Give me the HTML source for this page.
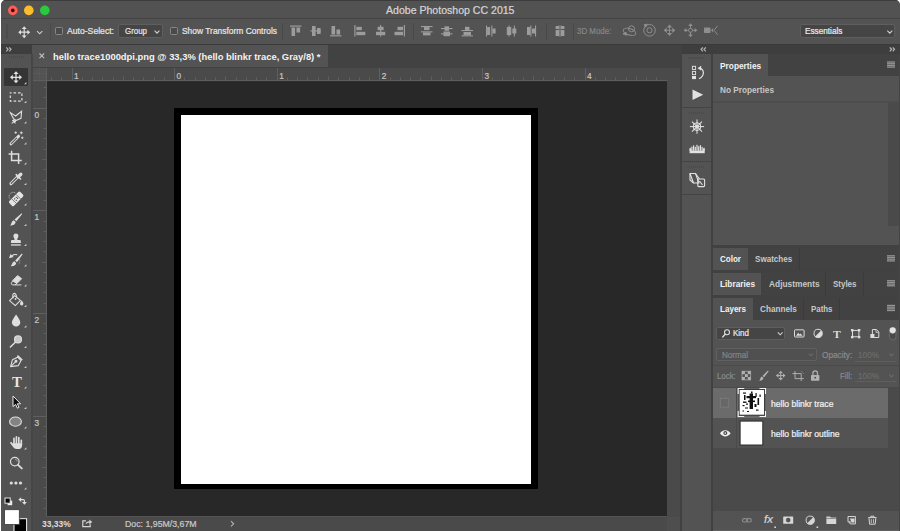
<!DOCTYPE html>
<html><head><meta charset="utf-8"><title>Adobe Photoshop CC 2015</title>
<style>
*{box-sizing:border-box;margin:0;padding:0}
html,body{width:900px;height:531px;overflow:hidden;background:#fff}
body{font-family:"Liberation Sans",sans-serif;font-size:9.5px;color:#ddd;position:relative}
.a{position:absolute}
svg{position:absolute;overflow:visible}
#win{left:0;top:0;width:900px;height:531px;background:#535353;overflow:hidden;clip-path:inset(0 0 0 1px round 5px 5px 0 0)}
.dot{width:9.600px;height:9.600px;border-radius:50%;top:5.600px}
.sep{width:1px;background:#4a4a4a;top:23px;height:17px}
.t{white-space:nowrap;line-height:12px;transform-origin:0 50%;-webkit-text-stroke:0.22px currentColor}
.b{-webkit-text-stroke:0}
.b{font-weight:bold}
.cb{width:8px;height:8px;border:1px solid #868686;border-radius:1.5px;background:#4a4a4a}
.dd{background:#454545;border:1px solid #5e5e5e;border-radius:2px}
.tsep{width:1px;height:22px;background:#3b3b3b}
.tb{background:#424242;height:22px;left:713px;width:187px}
.tab{background:#535353;height:22px;left:713px}
.tri{width:0;height:0;border-left:3px solid transparent;border-bottom:3px solid #cfcfcf}
.grip{height:2px;background:repeating-linear-gradient(90deg,#4a4a4a 0 1px,transparent 1px 2px)}
</style></head><body>
<div id="win" class="a">
<div class="a" style="left:0px;top:0px;width:900px;height:18px;background:#525252;border-top:1px solid #3c3c3c"></div>
<div class="a t" style="left:386.4px;top:4.26px;font-size:10.8px;color:#d6d6d6;transform:scaleX(0.9774);">Adobe Photoshop CC 2015</div>
<div class="a" style="left:0px;top:18px;width:900px;height:27px;background:#535353;border-top:1px solid #434343;border-bottom:1px solid #3a3a3a"></div>
<div class="a" style="left:6px;top:24px;width:1.5px;height:15px;background:#4c4c4c;"></div>
<div class="a sep" style="left:50px"></div>
<div class="a cb" style="left:55px;top:27px"></div>
<div class="a t" style="left:67px;top:25.48px;font-size:9.0px;color:#e6e6e6;transform:scaleX(0.9586);">Auto-Select:</div>
<div class="a dd" style="left:118px;top:24px;width:45px;height:14px"></div>
<div class="a t" style="left:125px;top:25.48px;font-size:9.0px;color:#e6e6e6;transform:scaleX(0.8795);">Group</div>
<div class="a cb" style="left:170px;top:27px"></div>
<div class="a t" style="left:181.7px;top:25.48px;font-size:9.0px;color:#e6e6e6;transform:scaleX(0.9355);">Show Transform Controls</div>
<div class="a sep" style="left:282px"></div>
<div class="a sep" style="left:413px"></div>
<div class="a sep" style="left:546px"></div>
<div class="a sep" style="left:573px"></div>
<div class="a t" style="left:577px;top:25.48px;font-size:9.0px;color:#858585;transform:scaleX(0.8813);">3D Mode:</div>
<div class="a dd" style="left:800px;top:24px;width:95px;height:14px"></div>
<div class="a t" style="left:805.3px;top:25.48px;font-size:9.0px;color:#ececec;transform:scaleX(0.9115);">Essentials</div>
<div class="a" style="left:33px;top:45px;width:648px;height:22px;background:#424242;"></div>
<div class="a" style="left:33px;top:45px;width:294.8px;height:21.7px;background:#535353;"></div>
<div class="a t b" style="left:52.5px;top:51.18px;font-size:9.0px;color:#f2f2f2;transform:scaleX(1.0434);">hello trace1000dpi.png @ 33,3% (hello blinkr trace, Gray/8) *</div>
<div class="a" style="left:33px;top:67px;width:648px;height:14px;background:#4a4a4a;border-top:1px solid #424242"></div>
<div class="a" style="left:33px;top:68px;width:14px;height:449px;background:#4a4a4a;"></div>
<div class="a" style="left:33px;top:68px;width:13px;height:12px;background:#535353;"></div>
<div class="a" style="left:47px;top:81px;width:620px;height:435px;background:#282828;"></div>
<div class="a" style="left:174px;top:108px;width:364px;height:381px;background:#000;"></div>
<div class="a" style="left:181px;top:115px;width:349.5px;height:369px;background:#fff;"></div>
<div class="a" style="left:667px;top:81px;width:12.5px;height:450px;background:#4a4a4a;"></div>
<div class="a" style="left:33px;top:516.5px;width:634px;height:15px;background:#4a4a4a;"></div>
<div class="a t b" style="left:42.3px;top:517.68px;font-size:9.0px;color:#dedede;transform:scaleX(0.9400);">33,33%</div>
<div class="a t" style="left:125.4px;top:517.68px;font-size:9.0px;color:#c8c8c8;transform:scaleX(0.9735);">Doc: 1,95M/3,67M</div>
<div class="a t" style="left:74.0px;top:69.72px;font-size:8.3px;color:#c6c6c6;">1</div>
<div class="a t" style="left:176.6px;top:69.72px;font-size:8.3px;color:#c6c6c6;">0</div>
<div class="a t" style="left:279.2px;top:69.72px;font-size:8.3px;color:#c6c6c6;">1</div>
<div class="a t" style="left:381.8px;top:69.72px;font-size:8.3px;color:#c6c6c6;">2</div>
<div class="a t" style="left:484.4px;top:69.72px;font-size:8.3px;color:#c6c6c6;">3</div>
<div class="a t" style="left:587.0px;top:69.72px;font-size:8.3px;color:#c6c6c6;">4</div>
<div class="a t" style="left:34.6px;top:108.82px;font-size:8.3px;color:#c6c6c6;">0</div>
<div class="a t" style="left:34.6px;top:211.42px;font-size:8.3px;color:#c6c6c6;">1</div>
<div class="a t" style="left:34.6px;top:314.02px;font-size:8.3px;color:#c6c6c6;">2</div>
<div class="a t" style="left:34.6px;top:416.62px;font-size:8.3px;color:#c6c6c6;">3</div>
<div class="a" style="left:0px;top:45px;width:33px;height:486px;background:#535353;"></div>
<div class="a" style="left:0px;top:45px;width:32px;height:9px;background:#3e3e3e;"></div>
<div class="a" style="left:30.7px;top:54px;width:2.1px;height:477px;background:#464646;"></div>
<div class="a grip" style="left:9px;top:56px;width:15px"></div>
<div class="a" style="left:4px;top:68px;width:24px;height:18px;background:#353535;border-radius:1px"></div>
<div class="a" style="left:679.5px;top:45px;width:220.5px;height:486px;background:#414141;"></div>
<div class="a" style="left:682px;top:45px;width:218px;height:9px;background:#3e3e3e;"></div>
<div class="a" style="left:682px;top:54px;width:28.6px;height:477px;background:#535353;"></div>
<div class="a" style="left:682px;top:107px;width:29px;height:1px;background:#444;"></div>
<div class="a" style="left:682px;top:161px;width:29px;height:1px;background:#444;"></div>
<div class="a" style="left:682px;top:194px;width:29px;height:1px;background:#444;"></div>
<div class="a grip" style="left:689px;top:57px;width:15px"></div>
<div class="a grip" style="left:689px;top:112px;width:15px"></div>
<div class="a grip" style="left:689px;top:166px;width:15px"></div>
<div class="a tb" style="top:54px"></div><div class="a tab" style="top:54px;width:55px"></div>
<div class="a t b" style="left:720.3px;top:59.88px;font-size:9.0px;color:#f2f2f2;transform:scaleX(0.9252);">Properties</div>
<div class="a" style="left:713px;top:76px;width:187px;height:169px;background:#535353;"></div>
<div class="a" style="left:713px;top:100.5px;width:187px;height:2px;background:#4d4d4d;"></div>
<div class="a" style="left:888px;top:102.5px;width:12px;height:123.5px;background:#4a4a4a;"></div>
<div class="a t b" style="left:720px;top:83.88px;font-size:9.0px;color:#c6c6c6;transform:scaleX(0.9150);">No Properties</div>
<div class="a tb" style="top:248px"></div><div class="a tab" style="top:248px;width:35px"></div>
<div class="a t b" style="left:720.3px;top:253.18px;font-size:9.0px;color:#f2f2f2;transform:scaleX(0.8936);">Color</div>
<div class="a t b" style="left:755px;top:253.18px;font-size:9.0px;color:#c8c8c8;transform:scaleX(0.8957);">Swatches</div>
<div class="a tsep" style="left:799px;top:248px"></div>
<div class="a tb" style="top:273px"></div><div class="a tab" style="top:273px;width:48px"></div>
<div class="a t b" style="left:720.3px;top:277.98px;font-size:9.0px;color:#f2f2f2;transform:scaleX(0.9203);">Libraries</div>
<div class="a t b" style="left:768.5px;top:277.98px;font-size:9.0px;color:#c8c8c8;transform:scaleX(0.9282);">Adjustments</div>
<div class="a tsep" style="left:825px;top:273px"></div>
<div class="a t b" style="left:832.9px;top:277.98px;font-size:9.0px;color:#c8c8c8;transform:scaleX(0.8857);">Styles</div>
<div class="a tsep" style="left:863px;top:273px"></div>
<div class="a tb" style="top:298px"></div><div class="a tab" style="top:298px;width:40px"></div>
<div class="a t b" style="left:720.3px;top:303.08px;font-size:9.0px;color:#f2f2f2;transform:scaleX(0.8956);">Layers</div>
<div class="a t b" style="left:760px;top:303.08px;font-size:9.0px;color:#c8c8c8;transform:scaleX(0.9083);">Channels</div>
<div class="a tsep" style="left:803px;top:298px"></div>
<div class="a t b" style="left:810.7px;top:303.08px;font-size:9.0px;color:#c8c8c8;transform:scaleX(0.8770);">Paths</div>
<div class="a tsep" style="left:839px;top:298px"></div>
<div class="a" style="left:713px;top:320px;width:187px;height:211px;background:#535353;"></div>
<div class="a dd" style="left:716px;top:327px;width:69px;height:13px"></div>
<div class="a t" style="left:732.8px;top:327.38px;font-size:9.0px;color:#e6e6e6;transform:scaleX(0.8881);">Kind</div>
<div class="a" style="left:716px;top:348px;width:101px;height:13px;border:1px solid #606060;border-radius:2px;background:#505050"></div>
<div class="a t" style="left:722px;top:348.78px;font-size:9.0px;color:#858585;transform:scaleX(0.8961);">Normal</div>
<div class="a t" style="left:821.6px;top:348.78px;font-size:9.0px;color:#8a8a8a;transform:scaleX(0.9177);">Opacity:</div>
<div class="a t" style="left:857.5px;top:348.78px;font-size:9.0px;color:#6c6c6c;transform:scaleX(0.9118);">100%</div>
<div class="a" style="left:855px;top:361px;width:41px;height:1px;background:#5e5e5e;"></div>
<div class="a" style="left:713px;top:365px;width:187px;height:1px;background:#4a4a4a;"></div>
<div class="a t" style="left:717.4px;top:369.58px;font-size:9.0px;color:#8a8a8a;transform:scaleX(0.8738);">Lock:</div>
<div class="a t" style="left:839.8px;top:369.58px;font-size:9.0px;color:#8a8a8a;transform:scaleX(0.8714);">Fill:</div>
<div class="a t" style="left:857.5px;top:369.58px;font-size:9.0px;color:#6c6c6c;transform:scaleX(0.9118);">100%</div>
<div class="a" style="left:855px;top:381px;width:41px;height:1px;background:#5e5e5e;"></div>
<div class="a" style="left:713px;top:387px;width:187px;height:124px;background:#4a4a4a;"></div>
<div class="a" style="left:713px;top:388px;width:175px;height:29.5px;background:#6b6b6b;"></div>
<div class="a" style="left:713px;top:418px;width:175px;height:30px;background:#535353;"></div>
<div class="a" style="left:736px;top:388px;width:1px;height:60px;background:#4a4a4a;"></div>
<div class="a t" style="left:770.5px;top:398.08px;font-size:9.0px;color:#f2f2f2;transform:scaleX(0.9522);">hello blinkr trace</div>
<div class="a t" style="left:770.5px;top:427.98px;font-size:9.0px;color:#f2f2f2;transform:scaleX(0.9508);">hello blinkr outline</div>
<div class="a" style="left:713px;top:511px;width:187px;height:20px;background:#535353;"></div>
<div class="a" style="left:713px;top:529.5px;width:187px;height:1.5px;background:#606060;"></div>
<div class="a" style="left:667px;top:516.5px;width:12.5px;height:14.5px;background:#4e4e4e;"></div>
<div class="a t b" style="left:11.9px;top:375.63px;font-size:15.5px;color:#e6e6e6;transform:scaleX(0.9571);font-family:'Liberation Serif',serif;">T</div>
<div class="a t b" style="left:833.2px;top:327.79px;font-size:11px;color:#dcdcdc;transform:scaleX(1.0621);font-family:'Liberation Serif',serif;">T</div>
<div class="a t" style="left:763.6px;top:513.42px;font-size:11.5px;color:#d8d8d8;transform:scaleX(0.9829);font-style:italic;">fx</div>
<div class="a" style="left:899px;top:54px;width:1px;height:477px;background:#444;"></div>
<svg style="left:0;top:0" width="900" height="531" viewBox="0 0 900 531" fill="none" stroke="none">
<circle cx="12.800" cy="10.400" r="4.800" fill="#fc5f57"/><circle cx="12.800" cy="10.400" r="1.800" fill="#3a0000"/><circle cx="28.800" cy="10.400" r="4.800" fill="#fdbc2e"/><circle cx="44.800" cy="10.400" r="4.800" fill="#2bc840"/>
<g stroke="#dedede" stroke-width="1.2" fill="#dedede" stroke-linejoin="miter"><path d="M20.1 32.2H28.299999999999997M24.2 28.1V36.300000000000004" fill="none"/><path stroke="none" d="M18.200000000000003 32.2l2.8000000000000003 -2.5v5.0zM30.199999999999996 32.2l-2.8000000000000003 -2.5v5.0zM24.2 26.200000000000003l-2.5 2.8000000000000003h5.0zM24.2 38.2l-2.5 -2.8000000000000003h5.0z"/></g>
<path d="M37.1 31.1L39.7 33.8L42.300000000000004 31.1" stroke="#cfcfcf" stroke-width="1.1" fill="none"/>
<path d="M154.6 30.7L157 33.1L159.4 30.7" stroke="#cfcfcf" stroke-width="1.1" fill="none"/>
<path d="M887.3 30.65L889.8 33.2L892.3 30.65" stroke="#cfcfcf" stroke-width="1.1" fill="none"/>
<rect x="290" y="25.5" width="11.5" height="1.2" fill="#9c9c9c"/><rect x="291.5" y="27.5" width="3.6" height="8.5" fill="#9c9c9c"/><rect x="296.5" y="27.5" width="3.6" height="5" fill="#9c9c9c"/>
<rect x="310.5" y="30.3" width="10.5" height="1.2" fill="#9c9c9c"/><rect x="312" y="26" width="3.6" height="10" fill="#9c9c9c"/><rect x="317" y="28" width="3.6" height="6" fill="#9c9c9c"/>
<rect x="330" y="35.2" width="11.5" height="1.2" fill="#9c9c9c"/><rect x="331.5" y="26" width="3.6" height="8.5" fill="#9c9c9c"/><rect x="336.5" y="29.5" width="3.6" height="5" fill="#9c9c9c"/>
<rect x="354.3" y="25" width="1.2" height="11.5" fill="#9c9c9c"/><rect x="356.3" y="26.8" width="5.5" height="3.4" fill="#9c9c9c"/><rect x="356.3" y="31.8" width="9" height="3.4" fill="#9c9c9c"/>
<rect x="380" y="25" width="1.2" height="11.5" fill="#9c9c9c"/><rect x="377.6" y="26.8" width="6" height="3.4" fill="#9c9c9c"/><rect x="376" y="31.8" width="9.2" height="3.4" fill="#9c9c9c"/>
<rect x="403.8" y="25" width="1.2" height="11.5" fill="#9c9c9c"/><rect x="397.5" y="26.8" width="5.5" height="3.4" fill="#9c9c9c"/><rect x="394.5" y="31.8" width="8.5" height="3.4" fill="#9c9c9c"/>
<rect x="421" y="26" width="11.5" height="1.1" fill="#9c9c9c"/><rect x="424" y="27.1" width="5.5" height="3" fill="#9c9c9c"/><rect x="421" y="31.3" width="11.5" height="1.1" fill="#9c9c9c"/><rect x="423" y="32.4" width="7.5" height="3" fill="#9c9c9c"/>
<rect x="441" y="28" width="11.5" height="1.1" fill="#9c9c9c"/><rect x="444.5" y="26.3" width="4.5" height="4.5" fill="#9c9c9c"/><rect x="441" y="33.3" width="11.5" height="1.1" fill="#9c9c9c"/><rect x="443.5" y="31.5" width="6.5" height="4.7" fill="#9c9c9c"/>
<rect x="461.5" y="30" width="11.5" height="1.1" fill="#9c9c9c"/><rect x="465" y="26.8" width="4.5" height="3.2" fill="#9c9c9c"/><rect x="461.5" y="35.3" width="11.5" height="1.1" fill="#9c9c9c"/><rect x="463.5" y="32" width="7.5" height="3.3" fill="#9c9c9c"/>
<rect x="486" y="25.5" width="1.1" height="11" fill="#9c9c9c"/><rect x="487.1" y="27" width="3" height="8" fill="#9c9c9c"/><rect x="491.3" y="25.5" width="1.1" height="11" fill="#9c9c9c"/><rect x="492.4" y="28.5" width="3.2" height="5" fill="#9c9c9c"/>
<rect x="508.5" y="25.5" width="1.1" height="11" fill="#9c9c9c"/><rect x="506.8" y="27" width="4.5" height="8" fill="#9c9c9c"/><rect x="513.8" y="25.5" width="1.1" height="11" fill="#9c9c9c"/><rect x="512.3" y="28.5" width="4" height="5" fill="#9c9c9c"/>
<rect x="530.3" y="25.5" width="1.1" height="11" fill="#9c9c9c"/><rect x="527" y="27" width="3.3" height="8" fill="#9c9c9c"/><rect x="535" y="25.5" width="1.1" height="11" fill="#9c9c9c"/><rect x="532" y="28.5" width="3" height="5" fill="#9c9c9c"/>
<rect x="555.6" y="26" width="3.6" height="3" fill="#9c9c9c"/><rect x="555.6" y="30" width="3.6" height="6" fill="#9c9c9c"/><rect x="560.8" y="26" width="3.6" height="3" fill="#9c9c9c"/><rect x="560.8" y="30" width="3.6" height="6" fill="#9c9c9c"/><rect x="559.6" y="25" width="0.8" height="12" fill="#9c9c9c"/>
<g transform="translate(0 -0.700)">
<g stroke="#8e8e8e" stroke-width="1" fill="none"><circle cx="631.5" cy="29.5" r="3"/><ellipse cx="629.5" cy="32.5" rx="6.5" ry="3.2" transform="rotate(18 629.5 32.5)"/><path d="M623 34.5l3.5 1.5l-0.5-3z" fill="#8e8e8e"/></g>
<g stroke="#8e8e8e" stroke-width="1" fill="none"><circle cx="649.5" cy="31" r="5.8"/><circle cx="649.5" cy="31" r="2.6"/><path d="M644 25.5l3.3-0.6l-1.5 3z" fill="#8e8e8e"/></g>
<g stroke="#8e8e8e" stroke-width="1" fill="#8e8e8e" stroke-linejoin="miter"><path d="M665.6 31H673.4M669.5 27.1V34.9" fill="none"/><path stroke="none" d="M663.7 31l3.0 -2.6999999999999997v5.3999999999999995zM675.3 31l-3.0 -2.6999999999999997v5.3999999999999995zM669.5 25.200000000000003l-2.6999999999999997 3.0h5.3999999999999995zM669.5 36.8l-2.6999999999999997 -3.0h5.3999999999999995z"/></g>
<g stroke="#8e8e8e" stroke-width="1" fill="#8e8e8e"><path d="M685 31H696M690.5 25.5V36.5" fill="none"/><circle cx="690.5" cy="31" r="2" fill="#535353"/><path stroke="none" d="M690.5 24l2.3 2.8h-4.6zM690.5 38l2.3-2.8h-4.6zM683.6 31l2.8-2.3v4.6zM697.4 31l-2.8-2.3v4.6z"/></g>
<g fill="#8e8e8e"><rect x="704" y="28.3" width="6.5" height="5.4" rx="0.8"/><path d="M711 31l2.2-2.2v4.4z"/><path d="M717.5 26.5l-3.3 4.5l3.3 4.5" fill="none" stroke="#8e8e8e" stroke-width="0.9"/></g>
</g>
<path d="M39.5 53.5l4.6 4.6M44.1 53.5l-4.6 4.6" stroke="#bdbdbd" stroke-width="1.1"/>
<path d="M6.3 47.3l1.8 2l-1.8 2M9.2 47.3l1.8 2l-1.8 2" stroke="#b4b4b4" stroke-width="1.250" fill="none"/>
<path d="M705.8 47.3l-1.8 2l1.8 2M702.9 47.3l-1.8 2l1.8 2" stroke="#b4b4b4" stroke-width="1.250" fill="none"/>
<path d="M889.8 47.3l1.8 2l-1.8 2M892.6999999999999 47.3l1.8 2l-1.8 2" stroke="#b4b4b4" stroke-width="1.250" fill="none"/>
<rect x="887" y="61.400000000000006" width="8" height="1.25" fill="#959595"/><rect x="887" y="63.1" width="8" height="1.25" fill="#959595"/><rect x="887" y="64.8" width="8" height="1.25" fill="#959595"/><rect x="887" y="66.5" width="8" height="1.25" fill="#959595"/>
<rect x="887" y="255.2" width="8" height="1.25" fill="#959595"/><rect x="887" y="256.9" width="8" height="1.25" fill="#959595"/><rect x="887" y="258.6" width="8" height="1.25" fill="#959595"/><rect x="887" y="260.3" width="8" height="1.25" fill="#959595"/>
<rect x="887" y="280.09999999999997" width="8" height="1.25" fill="#959595"/><rect x="887" y="281.79999999999995" width="8" height="1.25" fill="#959595"/><rect x="887" y="283.5" width="8" height="1.25" fill="#959595"/><rect x="887" y="285.2" width="8" height="1.25" fill="#959595"/>
<rect x="887" y="304.8" width="8" height="1.25" fill="#959595"/><rect x="887" y="306.5" width="8" height="1.25" fill="#959595"/><rect x="887" y="308.20000000000005" width="8" height="1.25" fill="#959595"/><rect x="887" y="309.90000000000003" width="8" height="1.25" fill="#959595"/>
<g stroke="#e6e6e6" stroke-width="1.2" fill="#e6e6e6" stroke-linejoin="miter"><path d="M11.9 77.3H20.1M16 73.2V81.39999999999999" fill="none"/><path stroke="none" d="M10.0 77.3l2.8000000000000003 -2.5v5.0zM22.0 77.3l-2.8000000000000003 -2.5v5.0zM16 71.3l-2.5 2.8000000000000003h5.0zM16 83.3l-2.5 -2.8000000000000003h5.0z"/></g>
<rect x="10.3" y="92.8" width="11.6" height="8.4" stroke="#dedede" stroke-width="1.2" stroke-dasharray="2.6 1.9" stroke-dashoffset="1.3"/>
<g stroke="#dedede" stroke-width="1.1" fill="none" stroke-linejoin="miter"><path d="M10.4 112.6L15.6 116L21.6 111.2L21 118.3L15.3 120.8L12.6 117.2z"/><path d="M15.3 120.8l-3.6 2.6M12.3 120.2l3.2 3.2"/><circle cx="14.6" cy="120.6" r="1.1"/></g>
<g stroke="#dedede" fill="none"><path d="M11 143.8L18.6 136.2" stroke-width="3" stroke-linecap="round"/><path d="M11.2 143.6L16.6 138.2" stroke="#535353" stroke-width="1.1" stroke-linecap="round"/><path d="M21.3 131.3v3M19.8 132.8h3M15.7 131.4v2.4M14.5 132.6h2.4M22.3 136.6v2.4M21.1 137.8h2.4" stroke-width="0.9"/></g>
<path d="M11.6 150.8V160.6H21.8M8.6 153.9H18.6V164" stroke="#dedede" stroke-width="1.5" fill="none"/>
<g stroke="#dedede" fill="none"><path d="M11 183.6L17.2 177.4" stroke-width="3.1" stroke-linecap="round"/><path d="M11.2 183.4L16.6 178" stroke="#535353" stroke-width="1.2" stroke-linecap="round"/><path d="M16.2 174.6L20.6 179" stroke-width="1.6" stroke-linecap="round"/><path d="M18.4 176.6L20.8 174.2" stroke-width="3.4" stroke-linecap="round"/></g>
<g transform="rotate(-45 16 199)"><rect x="8.400" y="195.700" width="15.600" height="6.600" rx="1.500" fill="#e4e4e4"/><path d="M13.100 195.700v6.600M19.300 195.700v6.600" stroke="#535353" stroke-width="0.700"/><circle cx="16.200" cy="199" r="1.500" fill="none" stroke="#4a4a4a" stroke-width="1" stroke-dasharray="1.200 1.150"/></g>
<path d="M9.6 198.5a4.2 4.2 0 0 1 6.4-5.2" stroke="#c4c4c4" stroke-width="0.9" stroke-dasharray="1.2 1" fill="none"/>
<g fill="#dedede"><path d="M21.6 213.2L22.2 213.9L16.4 221.3L14.5 219.5z"/><path d="M13.8 220.3L15.7 222.1C15.4 224.6 12.8 225.8 10 225.6C11.6 224.6 11.2 221.2 13.8 220.3z"/></g>
<g fill="#dedede"><path d="M15.900 233.400a2.500 2.500 0 0 1 2.500 2.500c0 1.500-1.200 2.200-1.200 4h2.600a1 1 0 0 1 1 1v2H11v-2a1 1 0 0 1 1-1h2.600c0-1.800-1.200-2.500-1.200-4a2.500 2.500 0 0 1 2.500-2.500z"/><rect x="11" y="244.300" width="9.800" height="1.300"/></g>
<g fill="#dedede"><path d="M21.8 253.6L22.6 254.2L17 262.2L15.2 260.6z"/><path d="M14.4 261.3L16.2 263C15.8 265.3 13.4 266.5 10.6 266.2C12.2 265.2 11.8 262.2 14.4 261.3z"/><path d="M9 258.2l4.600-1.2l-1.1-1c1.500-1 3-1.200 4.600-0.600l0.300-0.900c-2.100-0.900-4.100-0.500-5.700 0.700l-1.200-1.100z"/></g><path d="M19.500 259.500c0.800 2.200 0 4.200-1.800 5.400" stroke="#bdbdbd" stroke-width="0.8" stroke-dasharray="1 1" fill="none"/>
<g stroke="#dedede" stroke-width="1" stroke-linejoin="round"><path d="M17.600 275.600L21.600 278.700L16.800 283.600L12.800 280.500z" fill="#dedede"/><path d="M12.800 280.500L16.800 283.600L15 284.900H12.200L11.200 283.800z" fill="none"/><path d="M15 284.900H21.400" fill="none"/></g>
<g stroke="#dedede" stroke-width="1.1" fill="none" stroke-linejoin="round"><path d="M14.600 295.600L20.400 300.400L15.200 305.600L9.600 300.600z"/><path d="M13.400 298.200c-1.400-2.600-0.400-4.800 0.800-4.800s2.200 1.400 2.600 4.200"/></g><path d="M21.600 300.200c1.400 1.800 1.800 2.800 1.800 3.600a1.700 1.700 0 0 1-3.400 0c0-0.800 0.400-1.800 1.600-3.600z" fill="#dedede"/><circle cx="15.600" cy="299" r="0.900" fill="#dedede"/>
<path d="M16.100 314.400c2.200 3.400 4.200 5.600 4.200 8a4.200 4.200 0 0 1-8.400 0c0-2.400 2-4.600 4.200-8z" fill="#dedede"/>
<circle cx="18" cy="339.400" r="3.500" fill="#c9c9c9" stroke="#dedede" stroke-width="1.1"/><path d="M15.300 342.200L10.400 347" stroke="#dedede" stroke-width="1.500" stroke-linecap="round"/>
<g stroke="#dedede" stroke-width="1.100" fill="none" stroke-linejoin="round"><path d="M10.600 366.600L12.400 359.800L17.600 357.200L21 360.600L18.400 365.600z"/><path d="M10.800 366.400L15.400 361.800"/><circle cx="16" cy="361.300" r="0.900" fill="#dedede"/><path d="M17.400 355.600L22.200 360.200" stroke-width="1.600"/></g>
<path d="M13 396V406.600L15.600 404.400L17.400 408.200L19 407.400L17.300 403.800H20.600z" fill="#0d0d0d" stroke="#e8e8e8" stroke-width="1" stroke-linejoin="round"/>
<ellipse cx="15.500" cy="421.600" rx="5.900" ry="4.600" fill="#838383" stroke="#dedede" stroke-width="1.100"/>
<path d="M14 438.300V444M16.400 436.800V444M18.800 437.500V444M21.300 440.300V445" stroke="#dedede" stroke-width="1.650" stroke-linecap="round"/><path d="M13.200 443.200H22.100V445.400c0 2.400-1.700 3.700-4.100 3.700h-1.400c-1.600 0-2.600-0.700-3.500-2l-2.800-3.900c-0.600-0.900 0.600-1.800 1.400-1l1.500 1.700z" fill="#dedede"/>
<circle cx="14.800" cy="461.600" r="4.300" stroke="#dedede" stroke-width="1.200" fill="none"/><path d="M18 464.900L21.800 468.400" stroke="#dedede" stroke-width="1.900" stroke-linecap="round"/><path d="M15 459.200a2.400 2.400 0 0 1 2.200 2.200" stroke="#bdbdbd" stroke-width="0.700" fill="none"/>
<circle cx="11.300" cy="483" r="1.600" fill="#dedede"/><circle cx="15.900" cy="483" r="1.600" fill="#dedede"/><circle cx="20.500" cy="483" r="1.600" fill="#dedede"/>
<path d="M26.400 82.0V84.3H24.100z" fill="#cfcfcf"/>
<path d="M26.400 100.7V103.0H24.100z" fill="#cfcfcf"/>
<path d="M26.400 121.2V123.5H24.100z" fill="#cfcfcf"/>
<path d="M26.400 142.2V144.5H24.100z" fill="#cfcfcf"/>
<path d="M26.400 162.2V164.5H24.100z" fill="#cfcfcf"/>
<path d="M26.400 182.7V185.0H24.100z" fill="#cfcfcf"/>
<path d="M26.400 203.2V205.5H24.100z" fill="#cfcfcf"/>
<path d="M26.400 223.7V226.0H24.100z" fill="#cfcfcf"/>
<path d="M26.400 243.7V246.0H24.100z" fill="#cfcfcf"/>
<path d="M26.400 264.2V266.5H24.100z" fill="#cfcfcf"/>
<path d="M26.400 284.2V286.5H24.100z" fill="#cfcfcf"/>
<path d="M26.400 304.7V307.0H24.100z" fill="#cfcfcf"/>
<path d="M26.400 325.2V327.5H24.100z" fill="#cfcfcf"/>
<path d="M26.400 345.7V348.0H24.100z" fill="#cfcfcf"/>
<path d="M26.400 365.7V368.0H24.100z" fill="#cfcfcf"/>
<path d="M26.400 386.2V388.5H24.100z" fill="#cfcfcf"/>
<path d="M26.400 406.7V409.0H24.100z" fill="#cfcfcf"/>
<path d="M26.400 426.2V428.5H24.100z" fill="#cfcfcf"/>
<path d="M26.400 447.2V449.5H24.100z" fill="#cfcfcf"/>
<path d="M26.400 487.2V489.5H24.100z" fill="#cfcfcf"/>
<rect x="7.600" y="500.600" width="4.600" height="4.600" fill="#f0f0f0"/><rect x="5" y="498" width="5.200" height="5.200" fill="#0a0a0a" stroke="#e6e6e6" stroke-width="1"/>
<g fill="#dedede"><path d="M18.400 499.600l2.800-2.400v4.800z"/><path d="M24.400 504.800l-2.400-2.800h4.800z"/></g><path d="M21 499.600h2.400a1 1 0 0 1 1 1V502.400" stroke="#dedede" stroke-width="1.100" fill="none"/>
<rect x="14" y="518.700" width="12.600" height="13" fill="#000" stroke="#f2f2f2" stroke-width="1"/>
<rect x="4.600" y="509.700" width="14.700" height="14.700" fill="#fff" stroke="#3a3a3a" stroke-width="0.800"/>
<path d="M51.5 77.5V81M61.5 77.5V81M72.5 68V81M82.5 77.5V81M92.5 77.5V81M102.5 77.5V81M113.5 77.5V81M123.5 76.5V81M133.5 77.5V81M143.5 77.5V81M154.5 77.5V81M164.5 77.5V81M174.5 68V81M184.5 77.5V81M195.5 77.5V81M205.5 77.5V81M215.5 77.5V81M225.5 76.5V81M236.5 77.5V81M246.5 77.5V81M256.5 77.5V81M266.5 77.5V81M277.5 68V81M287.5 77.5V81M297.5 77.5V81M307.5 77.5V81M318.5 77.5V81M328.5 76.5V81M338.5 77.5V81M349.5 77.5V81M359.5 77.5V81M369.5 77.5V81M379.5 68V81M390.5 77.5V81M400.5 77.5V81M410.5 77.5V81M420.5 77.5V81M431.5 76.5V81M441.5 77.5V81M451.5 77.5V81M461.5 77.5V81M472.5 77.5V81M482.5 68V81M492.5 77.5V81M502.5 77.5V81M513.5 77.5V81M523.5 77.5V81M533.5 76.5V81M543.5 77.5V81M554.5 77.5V81M564.5 77.5V81M574.5 77.5V81M585.5 68V81M595.5 77.5V81M605.5 77.5V81M615.5 77.5V81M626.5 77.5V81M636.5 76.5V81M646.5 77.5V81M656.5 77.5V81M43.5 87.5H47M43.5 97.5H47M33 108.5H47M43.5 118.5H47M43.5 128.5H47M43.5 138.5H47M43.5 149.5H47M42.5 159.5H47M43.5 169.5H47M43.5 180.5H47M43.5 190.5H47M43.5 200.5H47M33 210.5H47M43.5 221.5H47M43.5 231.5H47M43.5 241.5H47M43.5 251.5H47M42.5 262.5H47M43.5 272.5H47M43.5 282.5H47M43.5 292.5H47M43.5 303.5H47M33 313.5H47M43.5 323.5H47M43.5 333.5H47M43.5 344.5H47M43.5 354.5H47M42.5 364.5H47M43.5 374.5H47M43.5 385.5H47M43.5 395.5H47M43.5 405.5H47M33 416.5H47M43.5 426.5H47M43.5 436.5H47M43.5 446.5H47M43.5 457.5H47M42.5 467.5H47M43.5 477.5H47M43.5 487.5H47M43.5 498.5H47M43.5 508.5H47" stroke="#5f5f5f" stroke-width="1"/>
<path d="M46.400 68V516.500M33 80.600H667" stroke="#606060" stroke-width="1"/>
<path d="M33 73.500H46M39.500 68V80" stroke="#5c5c5c" stroke-width="1" stroke-dasharray="1 1"/>
<g stroke="#e2e2e2" stroke-width="0.9" fill="none"><rect x="692.400" y="66.300" width="3.200" height="3.200"/><rect x="692.400" y="71.400" width="3.200" height="3.200"/><rect x="692" y="76" width="4" height="3.100" fill="#e2e2e2" stroke="none"/><path d="M699 78.700C702.600 77.400 704.300 73.600 702.900 70.600C702.200 69.100 701.200 68.500 700.400 68.300" stroke-width="1.200"/><path d="M697.500 68.300l3.700-2.500v4.700z" fill="#e2e2e2" stroke="none"/></g>
<path d="M692.500 89.500V100.100L703.200 94.800z" fill="#e2e2e2"/>
<g stroke="#e2e2e2" fill="none"><circle cx="697" cy="126.600" r="3.900" stroke-width="1"/><circle cx="697" cy="126.600" r="1.500" fill="#e2e2e2"/><path d="M698.50 126.60L704.10 126.60" stroke-width="1.050"/><path d="M698.06 127.66L702.02 131.62" stroke-width="1.050"/><path d="M697.00 128.10L697.00 133.70" stroke-width="1.050"/><path d="M695.94 127.66L691.98 131.62" stroke-width="1.050"/><path d="M695.50 126.60L689.90 126.60" stroke-width="1.050"/><path d="M695.94 125.54L691.98 121.58" stroke-width="1.050"/><path d="M697.00 125.10L697.00 119.50" stroke-width="1.050"/><path d="M698.06 125.54L702.02 121.58" stroke-width="1.050"/></g>
<rect x="689.6" y="150.6" width="15.1" height="2.6" fill="#e2e2e2"/><rect x="689.6" y="147.8" width="1.2" height="3" fill="#e2e2e2"/><rect x="691.3" y="146.60000000000002" width="1.2" height="4.2" fill="#e2e2e2"/><rect x="693" y="145.4" width="1.2" height="5.4" fill="#e2e2e2"/><rect x="694.7" y="146.8" width="1.2" height="4" fill="#e2e2e2"/><rect x="696.4" y="144.8" width="1.2" height="6" fill="#e2e2e2"/><rect x="698.1" y="146.20000000000002" width="1.2" height="4.6" fill="#e2e2e2"/><rect x="699.8" y="145.20000000000002" width="1.2" height="5.6" fill="#e2e2e2"/><rect x="701.5" y="146.8" width="1.2" height="4" fill="#e2e2e2"/><rect x="703.4" y="147.8" width="1.2" height="3" fill="#e2e2e2"/><rect x="689.6" y="148.8" width="1.8" height="2" fill="#e2e2e2"/><rect x="702.9" y="148.8" width="1.8" height="2" fill="#e2e2e2"/>
<g stroke="#e2e2e2" stroke-width="1.100" fill="none" stroke-linejoin="round"><path d="M690 173.500h5.500l3.500 9.500h-5.500l-3.500-9.500z"/><path d="M690 173.500v6.500l3.500 3"/><rect x="697.800" y="179" width="6.800" height="7.600" rx="1"/><path d="M699.500 181l3 4M695.500 173.500l4 5.500"/></g>
<circle cx="727" cy="332.200" r="2.500" stroke="#dcdcdc" stroke-width="1.100"/><path d="M725.200 334.200L722.700 337" stroke="#dcdcdc" stroke-width="1.300" stroke-linecap="round"/>
<path d="M777.8000000000001 332.4L780.2 334.8L782.6 332.4" stroke="#cfcfcf" stroke-width="1.1" fill="none"/>
<path d="M808.8 353.55L811 355.8L813.2 353.55" stroke="#6c6c6c" stroke-width="1.1" fill="none"/>
<path d="M889.3 353.55L891.5 355.8L893.7 353.55" stroke="#6c6c6c" stroke-width="1.1" fill="none"/>
<path d="M889.3 374.55L891.5 376.8L893.7 374.55" stroke="#6c6c6c" stroke-width="1.1" fill="none"/>
<rect x="794.500" y="329.800" width="9.600" height="7.200" rx="0.800" stroke="#dcdcdc" stroke-width="1"/><path d="M796 335.800l2.200-3l1.400 1.800l1-1l2 2.200z" fill="#dcdcdc"/>
<circle cx="818.100" cy="333.400" r="4.100" stroke="#dcdcdc" stroke-width="1"/><path d="M821.100 330.400a4.200 4.200 0 0 1-6 6z" fill="#dcdcdc"/>
<rect x="852.500" y="330.400" width="6.400" height="6.400" stroke="#dcdcdc" stroke-width="1"/><rect x="851" y="329" width="2.4" height="2.4" fill="#dcdcdc"/><rect x="857.9" y="329" width="2.4" height="2.4" fill="#dcdcdc"/><rect x="851" y="335.9" width="2.4" height="2.4" fill="#dcdcdc"/><rect x="857.9" y="335.9" width="2.4" height="2.4" fill="#dcdcdc"/>
<path d="M872.400 329.500h4l2.400 2.400v5.600h-6.400z" stroke="#dcdcdc" stroke-width="1" fill="none"/><path d="M876 329.500v2.800h2.800" stroke="#dcdcdc" stroke-width="0.800" fill="none"/><rect x="870.400" y="334" width="4" height="4" fill="#dcdcdc"/>
<rect x="889.400" y="327.400" width="6.600" height="12.600" rx="3.300" stroke="#6a6a6a" stroke-width="1" fill="#4a4a4a"/><circle cx="892.700" cy="330.300" r="3.100" fill="#e4e4e4"/>
<rect x="742" y="371.2" width="2.9" height="2.9" fill="#b2b2b2"/><rect x="747.8" y="371.2" width="2.9" height="2.9" fill="#b2b2b2"/><rect x="744.9" y="374.1" width="2.9" height="2.9" fill="#b2b2b2"/><rect x="742" y="377" width="2.9" height="2.9" fill="#b2b2b2"/><rect x="747.8" y="377" width="2.9" height="2.9" fill="#b2b2b2"/><rect x="742" y="371.200" width="8.700" height="8.700" stroke="#b2b2b2" stroke-width="0.700"/>
<g fill="#b2b2b2"><path d="M767.900 370.600l0.800 0.700l-4.600 6l-1.600-1.400z"/><path d="M761.900 376.500l1.600 1.500c-0.300 2-2.300 2.800-4.300 2.600c1.200-0.800 0.800-3.300 2.700-4.100z"/></g>
<g stroke="#b2b2b2" stroke-width="1" fill="#b2b2b2" stroke-linejoin="miter"><path d="M777.8000000000001 375.6H783.6M780.7 372.70000000000005V378.5" fill="none"/><path stroke="none" d="M775.9000000000001 375.6l2.5 -2.1999999999999997v4.3999999999999995zM785.5 375.6l-2.5 -2.1999999999999997v4.3999999999999995zM780.7 370.80000000000007l-2.1999999999999997 2.5h4.3999999999999995zM780.7 380.4l-2.1999999999999997 -2.5h4.3999999999999995z"/></g>
<path d="M795 371v7.600h8.800M792.400 373.600h8.800v7.400" stroke="#b2b2b2" stroke-width="0.950" fill="none"/><path d="M801.500 371.500l2.500 2.500" stroke="#b2b2b2" stroke-width="0.800" stroke-dasharray="1 0.800"/>
<rect x="811" y="375" width="8.400" height="5.800" rx="0.800" fill="#b2b2b2"/><circle cx="815.200" cy="377.700" r="0.900" fill="#4a4a4a"/><path d="M812.900 375v-1.800a2.300 2.300 0 0 1 4.600 0V375" stroke="#b2b2b2" stroke-width="1.200" fill="none"/>
<rect x="720.300" y="398.300" width="8" height="8.800" stroke="#7c7c7c" stroke-width="0.800" fill="#676767"/>
<path d="M720 433.300c2.800-4.200 7.800-4.200 10.600 0c-2.800 4.200-7.800 4.200-10.600 0z" fill="#f0f0f0"/><circle cx="725.300" cy="433.100" r="2" fill="#4a4a4a"/><circle cx="725.300" cy="433.100" r="0.800" fill="#f0f0f0"/>
<rect x="739.100" y="389.400" width="25.500" height="25.800" fill="#fff" stroke="#2e2e2e" stroke-width="1"/>
<path d="M738.200 394v-5.500h6M759.500 388.500h6v5.500M765.500 411v5.500h-6M744.200 416.500h-6v-5.500" stroke="#f4f4f4" stroke-width="1.100" fill="none"/>
<rect x="749.6" y="393.5" width="3.4" height="15.5" fill="#111"/><rect x="746.5" y="396" width="9.5" height="2.2" fill="#111"/><rect x="748" y="400.5" width="7" height="1.6" fill="#111"/><rect x="743" y="392.5" width="3" height="1.2" fill="#111"/><rect x="744" y="395" width="1.5" height="5" fill="#111"/><rect x="755.5" y="393" width="1.2" height="4" fill="#111"/><rect x="757.5" y="398" width="1.6" height="7" fill="#111"/><rect x="743" y="401.5" width="3.5" height="1.4" fill="#111"/><rect x="742.5" y="405" width="2" height="1.2" fill="#111"/><rect x="745" y="407.5" width="3" height="1" fill="#111"/><rect x="754.5" y="404" width="2" height="3" fill="#111"/><rect x="742.5" y="410.5" width="1.5" height="1" fill="#111"/><rect x="747" y="411" width="2" height="1" fill="#111"/><rect x="756" y="409.5" width="2.5" height="1.2" fill="#111"/><rect x="751" y="391.5" width="1.5" height="2" fill="#111"/><rect x="759.5" y="394.5" width="1.2" height="2.5" fill="#111"/><rect x="746" y="403.5" width="2" height="1.2" fill="#111"/>
<rect x="740.100" y="421.100" width="22.700" height="23.900" fill="#fff" stroke="#2e2e2e" stroke-width="1"/>
<g stroke="#8a8a8a" stroke-width="1.100" fill="none"><rect x="742.400" y="518.600" width="5" height="3.400" rx="1.700"/><rect x="746.400" y="518.600" width="5" height="3.400" rx="1.700"/></g>
<path d="M774.300 526.500h1.700v1.600h-1.700zM816.500 526.500h1.700v1.600h-1.700z" fill="#d6d6d6"/>
<rect x="783.200" y="516.400" width="10" height="7.400" rx="0.600" fill="#d6d6d6"/><circle cx="788.200" cy="520.100" r="2.300" fill="#535353"/>
<circle cx="810.200" cy="520.200" r="4.100" stroke="#d6d6d6" stroke-width="1"/><path d="M813.200 517.200a4.200 4.200 0 0 1-6 6z" fill="#d6d6d6"/>
<path d="M826.400 516.400h3.600l1 1.200h5.200v6.400h-9.800z" fill="#d6d6d6"/><path d="M826.400 518.400h9.800" stroke="#535353" stroke-width="0.600"/>
<path d="M848 516.500h7.400v7.400h-5l-2.400-2.400z" stroke="#d6d6d6" stroke-width="1" fill="none"/><path d="M850.500 523.800v-2.600h-2.500M850 518.500h4.500v4h-3z" fill="#d6d6d6" stroke="none"/>
<g stroke="#d6d6d6" fill="none" stroke-width="1"><path d="M869 518.200l0.600 6h5.600l0.600-6"/><path d="M868.200 517.600h8.400M870.800 517.400v-1.200h3.200v1.200" /><path d="M871.300 519.200v4M873.500 519.200v4" stroke-width="0.800"/></g>
<path d="M86 520.800h-3.200v5.800h7.400v-2.400" stroke="#d4d4d4" stroke-width="1.200" fill="none"/><path d="M85.400 524.600c0.400-2.400 2-3.400 4-3.400v-1.800l2.800 2.600l-2.800 2.600v-1.800c-1.600 0-2.800 0.400-4 1.800z" fill="#d4d4d4"/>
<path d="M231 521.200l2.600 2.600l-2.600 2.600" stroke="#b4b4b4" stroke-width="1.100" fill="none"/>
</svg>
</div>
</body></html>
